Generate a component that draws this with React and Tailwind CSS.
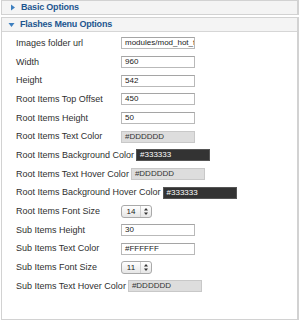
import React from "react";

const F = { fontFamily: '"Liberation Sans", Arial, sans-serif' };

function TextInput({ value, w = "w-[74px]" }) {
  return (
    <div className={`${w} h-[12px] border border-[#b9b9b9] border-t-[#a5a5a5] bg-white flex items-center pl-[3px] overflow-hidden whitespace-nowrap text-[8px] leading-none text-[#222]`}>
      {value}
    </div>
  );
}

function ColorInput({ value, dark }) {
  return dark ? (
    <div className="w-[74px] h-[12px] border border-[#555] bg-[#333333] flex items-center pl-[3px] text-[8px] leading-none text-white whitespace-nowrap">
      {value}
    </div>
  ) : (
    <div className="w-[74px] h-[12px] border border-[#c8c8c8] bg-[#dddddd] flex items-center pl-[3px] text-[8px] leading-none text-[#333] whitespace-nowrap">
      {value}
    </div>
  );
}

function Select({ value }) {
  return (
    <div className="w-[31px] h-[13px] rounded-[3px] border border-[#a9a9a9] bg-gradient-to-b from-white to-[#e6e6e6] flex items-center text-[8px] leading-none text-[#222]">
      <span className="w-[18px] text-center">{value}</span>
      <div className="h-full w-px bg-[#cfcfcf]" />
      <svg width="10" height="9" viewBox="0 0 10 9">
        <path d="M5 1 L7 3.5 L3 3.5 Z" fill="#333" />
        <path d="M5 8 L7 5.5 L3 5.5 Z" fill="#333" />
      </svg>
    </div>
  );
}

const rows = [
  ["Images folder url", <TextInput value="modules/mod_hot_f" />],
  ["Width", <TextInput value="960" />],
  ["Height", <TextInput value="542" />],
  ["Root Items Top Offset", <TextInput value="450" />],
  ["Root Items Height", <TextInput value="50" />],
  ["Root Items Text Color", <ColorInput value="#DDDDDD" />],
  ["Root Items Background Color", <ColorInput value="#333333" dark />],
  ["Root Items Text Hover Color", <ColorInput value="#DDDDDD" />],
  ["Root Items Background Hover Color", <ColorInput value="#333333" dark />],
  ["Root Items Font Size", <Select value="14" />],
  ["Sub Items Height", <TextInput value="30" />],
  ["Sub Items Text Color", <TextInput value="#FFFFFF" />],
  ["Sub Items Font Size", <Select value="11" />],
  ["Sub Items Text Hover Color", <ColorInput value="#DDDDDD" />],
];

export default function App() {
  return (
    <div style={F} className="w-[300px] h-[320px] bg-white flex flex-col overflow-hidden">
      <div className="mx-[1px] border-l border-r-2 border-t border-b border-[#d2d2d2] h-[15px] bg-[#f4f4f4] flex items-center">
        <svg width="6" height="7" viewBox="0 0 6 7" className="ml-[8px] mr-[5px]">
          <path d="M1 0.5 L5 3.5 L1 6.5 Z" fill="#3d7fbf" />
        </svg>
        <span className="text-[9px] font-bold text-[#1d5690] leading-none tracking-[-0.2px]">Basic Options</span>
      </div>
      <div className="mt-[2px] mx-[1px] flex-1 border-l border-r-2 border-t border-b border-[#d2d2d2] flex flex-col">
        <div className="h-[14px] bg-[#f4f4f4] border-b border-[#d6d6d6] flex items-center">
          <svg width="7" height="6" viewBox="0 0 7 6" className="ml-[6px] mr-[5px]">
            <path d="M0.5 1 L6.5 1 L3.5 5 Z" fill="#3d7fbf" />
          </svg>
          <span className="text-[9px] font-bold text-[#1d5690] leading-none tracking-[-0.2px]">Flashes Menu Options</span>
        </div>
        <div className="pt-[2px] flex flex-col">
          {rows.map(([label, ctrl], i) => (
            <div key={i} className="h-[18.7px] flex items-center pl-[14px]">
              <span className="min-w-[105px] pr-[2px] text-[9px] leading-none text-[#303030] whitespace-nowrap">{label}</span>
              {ctrl}
            </div>
          ))}
        </div>
      </div>
    </div>
  );
}
